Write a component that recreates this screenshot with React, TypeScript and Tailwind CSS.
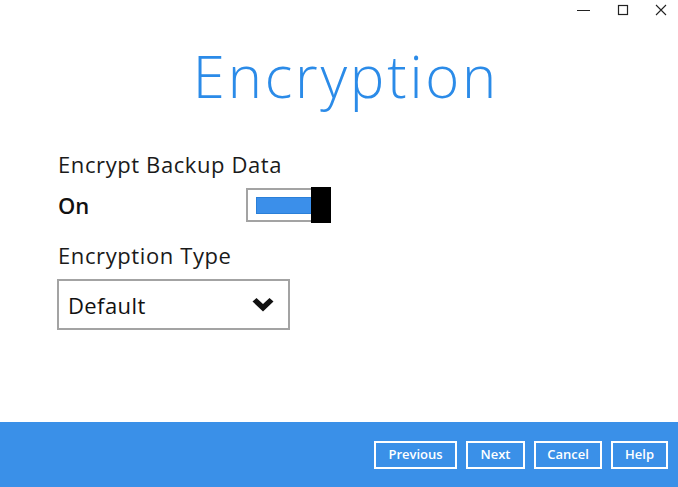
const font = { fontFamily: '"Open Sans", "Noto Sans", sans-serif' };

const FooterButton = ({ label, w }: { label: string; w: string }) => (
    <button className={`h-[28px] ${w} border-2 border-white text-white text-[13px] font-semibold leading-none flex items-center justify-center`}>
        {label}
    </button>
);

export default function App() {
    return (
        <div className="w-[678px] h-[487px] flex flex-col bg-white overflow-hidden" style={font}>
            <div className="relative flex-1">
                <div className="absolute top-0 right-0 flex items-center h-[22px]">
                    <svg width="40" height="22" viewBox="0 0 40 22"><line x1="17" y1="10.5" x2="30" y2="10.5" stroke="#222" strokeWidth="1" /></svg>
                    <svg width="38" height="22" viewBox="0 0 38 22"><rect x="18.5" y="5.5" width="9" height="9" fill="none" stroke="#222" strokeWidth="1.2" /></svg>
                    <svg width="40" height="22" viewBox="0 0 40 22"><path d="M18 5 L28 15 M28 5 L18 15" stroke="#222" strokeWidth="1.1" /></svg>
                </div>
                <h1 className="pt-[47px] pl-[14px] text-center text-[#2b8be8] text-[58px] font-light leading-none tracking-[2.8px]">
                    Encryption
                </h1>
                <div className="pl-[58px] mt-[48px]">
                    <div className="text-[22px] text-[#1a1a1a] leading-none tracking-[0.6px]">Encrypt Backup Data</div>
                    <div className="flex items-center mt-[12px]">
                        <span className="w-[188px] text-[22px] font-semibold text-[#111] leading-none">On</span>
                        <div className="relative w-[85px] h-[36px] flex items-center">
                            <div className="w-[80px] h-[34px] border-2 border-[#a3a3a3] flex items-center pl-[8px]">
                                <div className="w-[60px] h-[17px] bg-[#3b8fea] border border-[#2a7fd8]" />
                            </div>
                            <div className="absolute right-0 top-0 w-[20px] h-[36px] bg-black" />
                        </div>
                    </div>
                    <div className="mt-[21px] text-[22px] text-[#1a1a1a] leading-none tracking-[0.6px]">Encryption Type</div>
                    <div className="mt-[13px] -ml-px w-[233px] h-[51px] border-2 border-[#a3a3a3] flex items-center justify-between pl-[9px] pr-[14px]">
                        <span className="text-[22px] text-[#111] leading-none tracking-[0.4px]">Default</span>
                        <svg width="22" height="14" viewBox="0 0 22 14">
                            <path d="M0.5 3.5 L4.5 0 L11 6 L17.5 0 L21.5 3.5 L11 13.5 Z" fill="#111" />
                        </svg>
                    </div>
                </div>
            </div>
            <div className="h-[65px] bg-[#3a90e8] flex items-center justify-end gap-[9px] pr-[10px]">
                <FooterButton label="Previous" w="w-[83px]" />
                <FooterButton label="Next" w="w-[59px]" />
                <FooterButton label="Cancel" w="w-[68px]" />
                <FooterButton label="Help" w="w-[57px]" />
            </div>
        </div>
    );
}
